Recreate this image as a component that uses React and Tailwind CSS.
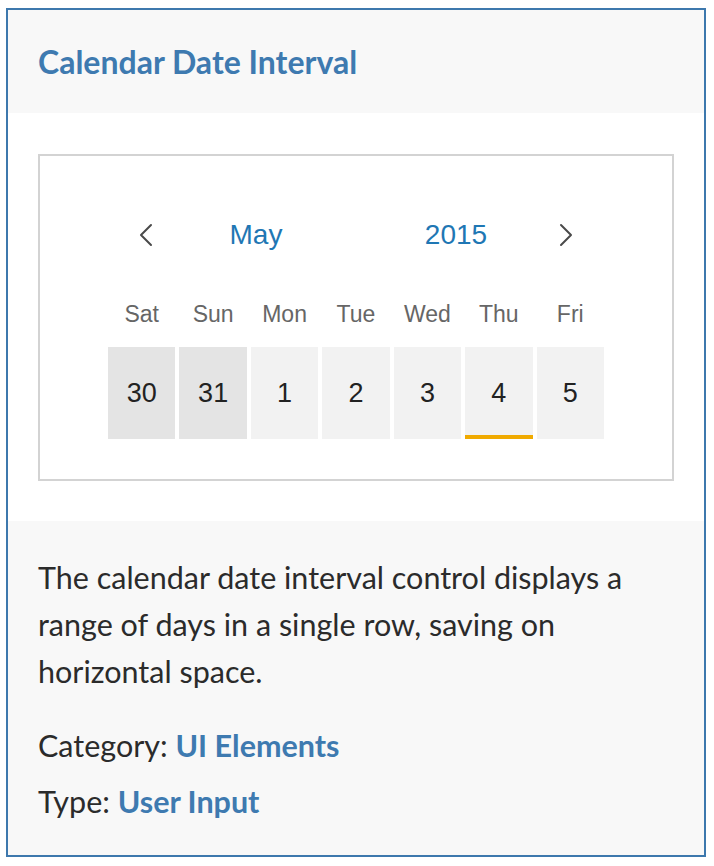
import React from "react";

const days = [
  { name: "Sat", num: "30", prev: true },
  { name: "Sun", num: "31", prev: true },
  { name: "Mon", num: "1" },
  { name: "Tue", num: "2" },
  { name: "Wed", num: "3" },
  { name: "Thu", num: "4", today: true },
  { name: "Fri", num: "5" },
];

function Chevron({ dir }) {
  return (
    <svg width="16" height="24" viewBox="0 0 16 24" fill="none">
      <path
        d={dir === "left" ? "M13 2 L3 12 L13 22" : "M3 2 L13 12 L3 22"}
        stroke="#4a4a4a"
        strokeWidth="2"
        strokeLinecap="round"
        strokeLinejoin="round"
      />
    </svg>
  );
}

export default function App() {
  return (
    <div className="min-h-screen bg-white pl-[6px] pt-[8px] font-['Lato',sans-serif]">
      <div className="w-[700px] border-2 border-[#3d78ad]">
        <div className="flex h-[103px] items-center bg-[#f8f8f8] px-[30px]">
          <h1 className="text-[32px] font-bold text-[#3e7ab0]">
            Calendar Date Interval
          </h1>
        </div>

        <div className="bg-white px-[30px] pb-[40px] pt-[41px]">
          <div className="h-[327px] border-2 border-[#d3d3d3] pt-[58px] font-['Liberation_Sans',Arial,sans-serif]">
            <div className="mx-auto grid h-[40px] w-[440px] grid-cols-[20px_1fr_1fr_20px] items-center">
              <div className="flex justify-center">
                <Chevron dir="left" />
              </div>
              <div className="text-center text-[28px] text-[#1f77b4]">May</div>
              <div className="text-center text-[28px] text-[#1f77b4]">2015</div>
              <div className="flex justify-center">
                <Chevron dir="right" />
              </div>
            </div>

            <div className="mx-auto mt-[46px] grid w-[496px] grid-cols-7 gap-x-[4px]">
              {days.map((d) => (
                <div
                  key={d.name}
                  className="h-[28px] text-center text-[23px] leading-[28px] text-[#666]"
                >
                  {d.name}
                </div>
              ))}
            </div>

            <div className="mx-auto mt-[19px] grid w-[496px] grid-cols-7 gap-x-[4px]">
              {days.map((d) => (
                <div
                  key={d.num}
                  className={`relative flex h-[92px] items-center justify-center text-[27px] text-[#222] ${
                    d.prev ? "bg-[#e4e4e4]" : "bg-[#f2f2f2]"
                  }`}
                >
                  {d.num}
                  {d.today && (
                    <span className="absolute bottom-0 left-0 right-0 h-[4px] bg-[#f0aa00]" />
                  )}
                </div>
              ))}
            </div>
          </div>
        </div>

        <div className="bg-[#f8f8f8] px-[30px] pb-[34px] pt-[33px] text-[30.5px] text-[#2b2b2b]">
          <p className="leading-[47px]">
            The calendar date interval control displays a range of days in a
            single row, saving on horizontal space.
          </p>
          <p className="mt-[30px] leading-[40px]">
            Category: <a className="font-bold text-[#3e7ab0]">UI Elements</a>
          </p>
          <p className="mt-[16px] leading-[40px]">
            Type: <a className="font-bold text-[#3e7ab0]">User Input</a>
          </p>
        </div>
      </div>
    </div>
  );
}
